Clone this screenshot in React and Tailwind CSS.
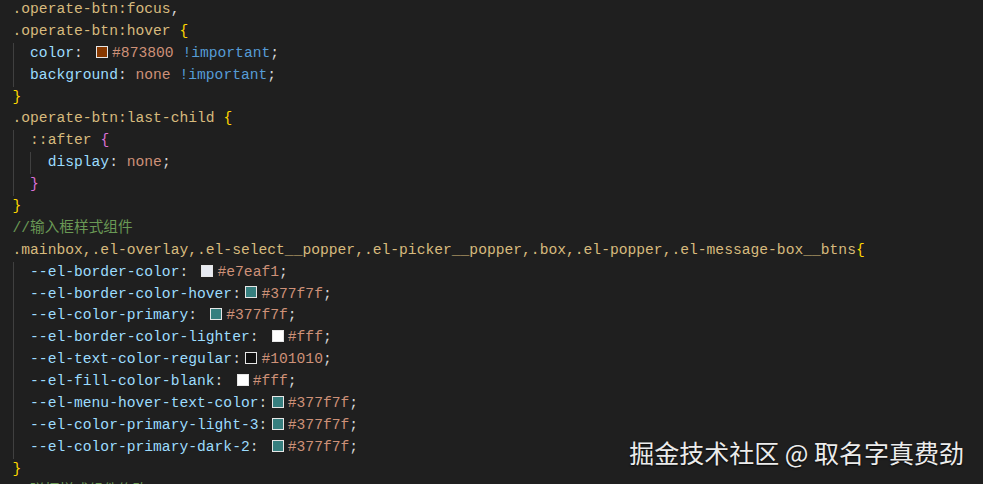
import React from 'react'

const C = {
  sel: 'text-[#d7ba7d]',
  prop: 'text-[#9cdcfe]',
  val: 'text-[#ce9178]',
  kw: 'text-[#569cd6]',
  punc: 'text-[#d4d4d4]',
  b1: 'text-[#ffd700]',
  b2: 'text-[#da70d6]',
  cmt: 'text-[#6a9955]',
}

function Swatch({ color }) {
  return (
    <span
      className="inline-block w-[0.82em] h-[0.82em] ml-[0.3em] mr-[0.28em] border-[0.1em] border-[#e6e6e6] align-[-0.06em]"
      style={{ background: color }}
    />
  )
}

function Guide({ active }) {
  return <span className={`block w-[2ch] shrink-0 border-l ${active ? 'border-[#404040]' : 'border-transparent'}`} />
}

function Line({ guides = [], children }) {
  return (
    <div className="flex h-[21.9px]">
      {guides.map((g, i) => (
        <Guide key={i} active={g} />
      ))}
      <span className="block whitespace-pre leading-[21.9px]">{children}</span>
    </div>
  )
}

function Var({ name, color, gap = true }) {
  return (
    <Line guides={[true]}>
      <span className={C.prop}>{name}</span>
      <span className={C.punc}>:</span>
      {gap && ' '}
      <Swatch color={color} />
      <span className={C.val}>{color}</span>
      <span className={C.punc}>;</span>
    </Line>
  )
}

export default function App() {
  return (
    <div className="relative w-[983px] h-[484px] overflow-hidden bg-[#1f1f1f]">
      <div
        className="pl-[12.5px] -mt-[1px] text-[14.65px]"
        style={{ fontFamily: '"Liberation Mono", "Noto Sans CJK SC", monospace' }}
      >
        <Line>
          <span className={C.sel}>.operate-btn:focus</span>
          <span className={C.punc}>,</span>
        </Line>
        <Line>
          <span className={C.sel}>.operate-btn:hover</span> <span className={C.b1}>{'{'}</span>
        </Line>
        <Line guides={[true]}>
          <span className={C.prop}>color</span>
          <span className={C.punc}>:</span> <Swatch color="#873800" />
          <span className={C.val}>#873800</span> <span className={C.kw}>!important</span>
          <span className={C.punc}>;</span>
        </Line>
        <Line guides={[true]}>
          <span className={C.prop}>background</span>
          <span className={C.punc}>:</span> <span className={C.val}>none</span>{' '}
          <span className={C.kw}>!important</span>
          <span className={C.punc}>;</span>
        </Line>
        <Line>
          <span className={C.b1}>{'}'}</span>
        </Line>
        <Line>
          <span className={C.sel}>.operate-btn:last-child</span> <span className={C.b1}>{'{'}</span>
        </Line>
        <Line guides={[true]}>
          <span className={C.sel}>::after</span> <span className={C.b2}>{'{'}</span>
        </Line>
        <Line guides={[true, true]}>
          <span className={C.prop}>display</span>
          <span className={C.punc}>:</span> <span className={C.val}>none</span>
          <span className={C.punc}>;</span>
        </Line>
        <Line guides={[true]}>
          <span className={C.b2}>{'}'}</span>
        </Line>
        <Line>
          <span className={C.b1}>{'}'}</span>
        </Line>
        <Line>
          <span className={C.cmt}>//输入框样式组件</span>
        </Line>
        <Line>
          <span className={C.sel}>
            .mainbox,.el-overlay,.el-select__popper,.el-picker__popper,.box,.el-popper,.el-message-box__btns
          </span>
          <span className={C.b1}>{'{'}</span>
        </Line>
        <Var name="--el-border-color" color="#e7eaf1" />
        <Var name="--el-border-color-hover" color="#377f7f" gap={false} />
        <Var name="--el-color-primary" color="#377f7f" />
        <Var name="--el-border-color-lighter" color="#fff" />
        <Var name="--el-text-color-regular" color="#101010" gap={false} />
        <Var name="--el-fill-color-blank" color="#fff" />
        <Var name="--el-menu-hover-text-color" color="#377f7f" gap={false} />
        <Var name="--el-color-primary-light-3" color="#377f7f" gap={false} />
        <Var name="--el-color-primary-dark-2" color="#377f7f" />
        <Line>
          <span className={C.b1}>{'}'}</span>
        </Line>
        <Line>
          <span className={C.cmt}>//弹框样式组件修改</span>
        </Line>
      </div>
      <div
        className="absolute right-[19px] bottom-[19px] text-[25px] leading-none text-[#ececec] [text-shadow:0_1px_2px_rgba(0,0,0,0.8)]"
        style={{ fontFamily: '"Noto Sans CJK SC", "Noto Sans", sans-serif' }}
      >
        掘金技术社区 @ 取名字真费劲
      </div>
    </div>
  )
}
